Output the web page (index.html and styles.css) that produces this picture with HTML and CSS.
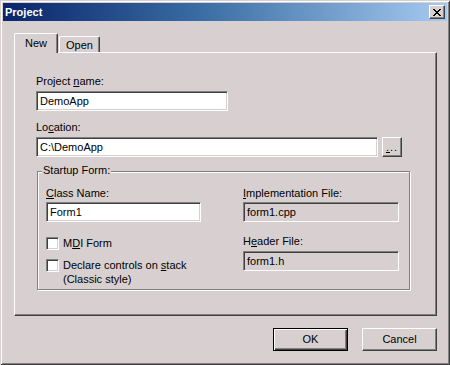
FILE: index.html
```html
<!DOCTYPE html>
<html>
<head>
<meta charset="utf-8">
<title>Project</title>
<link rel="stylesheet" href="styles.css">
</head>
<body>
<div class="window">
  <div class="titlebar">
    <span class="title">Project</span>
    <div class="close">
      <svg width="8" height="7" viewBox="0 0 8 7" shape-rendering="crispEdges">
        <path fill="#000" d="M0 0h2v1H0zM6 0h2v1H6zM1 1h2v1H1zM5 1h2v1H5zM2 2h4v1H2zM3 3h2v1H3zM2 4h4v1H2zM1 5h2v1H1zM5 5h2v1H5zM0 6h2v1H0zM6 6h2v1H6z"/>
      </svg>
    </div>
  </div>
  <div class="body">
    <div class="tabs">
      <div class="tab active">New</div>
      <div class="tab">Open</div>
    </div>
    <div class="panel">
      <div class="lbl">Project <u>n</u>ame:</div>
      <div class="field name">DemoApp</div>
      <div class="lbl loc-lbl">Lo<u>c</u>ation:</div>
      <div class="row">
        <div class="field loc">C:\DemoApp</div>
        <div class="btn browse"><span><u>.</u>..</span></div>
      </div>
      <div class="group">
        <span class="legend">Startup Form:</span>
        <div class="cols">
          <div class="col">
            <div class="lbl"><u>C</u>lass Name:</div>
            <div class="field">Form1</div>
            <div class="check first">
              <span class="box"></span>
              <span class="ctext">M<u>D</u>I Form</span>
            </div>
            <div class="check second">
              <span class="box"></span>
              <span class="ctext">Declare controls on <u>s</u>tack<br>(Classic style)</span>
            </div>
          </div>
          <div class="col">
            <div class="lbl"><u>I</u>mplementation File:</div>
            <div class="field ro">form1.cpp</div>
            <div class="lbl hdr-lbl">H<u>e</u>ader File:</div>
            <div class="field ro">form1.h</div>
          </div>
        </div>
      </div>
    </div>
    <div class="buttons">
      <div class="btn push default"><span>OK</span></div>
      <div class="btn push"><span>Cancel</span></div>
    </div>
  </div>
</div>
</body>
</html>
```

FILE: styles.css
```css
* { box-sizing: border-box; }

html, body {
  margin: 0;
  padding: 0;
  background: #d8d0d0;
}

body {
  font-family: "Liberation Sans", Arial, sans-serif;
  font-size: 11px;
  color: #000;
}

u { text-decoration: underline; text-underline-offset: 1px; }

.window {
  width: 450px;
  height: 365px;
  padding: 3px;
  background: #d8d0d0;
  box-shadow: inset 1px 1px #d8d0d0, inset -1px -1px #404040,
              inset 2px 2px #ffffff, inset -2px -2px #808080;
}

.titlebar {
  height: 18px;
  display: flex;
  align-items: center;
  justify-content: space-between;
  padding: 0 2px 0 2px;
  background: linear-gradient(to right, #0a246a 0%, #3a6ea5 45%, #a6caf0 100%);
}

.title {
  color: #fff;
  font-weight: bold;
  font-size: 11px;
  line-height: 13px;
}

.close {
  width: 16px;
  height: 14px;
  background: #d8d0d0;
  border: 1px solid;
  border-color: #fff #404040 #404040 #fff;
  box-shadow: inset -1px -1px #808080;
  display: flex;
  align-items: center;
  justify-content: center;
  padding-right: 1px;
}

.close svg { display: block; }

.body {
  padding: 12px 10px 0 11px;
}

.tabs {
  display: flex;
  align-items: flex-end;
  height: 19px;
}

.tab {
  height: 16px;
  width: 41px;
  margin-left: 1px;
  border: 1px solid;
  border-color: #fff #404040 transparent #fff;
  border-bottom: none;
  border-radius: 2px 2px 0 0;
  box-shadow: inset -1px 0 #808080;
  display: flex;
  align-items: center;
  justify-content: center;
  padding-top: 1px;
  line-height: 13px;
}

.tab.active {
  position: relative;
  z-index: 1;
  height: 20px;
  width: 44px;
  margin-left: 0;
  margin-right: 0;
  margin-bottom: -1px;
  background: #d8d0d0;
  padding-bottom: 1px;
}

.panel {
  width: 423px;
  height: 264px;
  border: 1px solid;
  border-color: #fff #404040 #404040 #fff;
  box-shadow: inset -1px -1px #808080;
  padding: 22px 0 0 21px;
}

.lbl {
  line-height: 13px;
  height: 13px;
  margin-bottom: 3px;
  white-space: nowrap;
}

.loc-lbl { margin-top: 10px; }

.field {
  height: 20px;
  background: #fff;
  border: 1px solid;
  border-color: #808080 #fff #fff #808080;
  box-shadow: inset 1px 1px #404040, inset -1px -1px #d8d0d0;
  padding: 0 3px;
  line-height: 18px;
  white-space: nowrap;
  overflow: hidden;
}

.field.name { width: 192px; }

.row {
  display: flex;
  gap: 4px;
}

.field.loc { width: 342px; }

.btn {
  background: #d8d0d0;
  border: 1px solid;
  border-color: #fff #404040 #404040 #fff;
  box-shadow: inset -1px -1px #808080;
  display: flex;
  align-items: center;
  justify-content: center;
}

.browse {
  width: 20px;
  height: 20px;
  align-items: flex-end;
  padding-bottom: 3px;
  letter-spacing: 1px;
  line-height: 11px;
}

.group {
  position: relative;
  margin-top: 14px;
  margin-left: 1px;
  width: 373px;
  height: 119px;
  border: 1px solid #808080;
  box-shadow: inset 1px 1px #fff, 1px 1px #fff;
  padding: 15px 0 0 8px;
}

.legend {
  position: absolute;
  top: -8px;
  left: 4px;
  padding: 0 1px;
  line-height: 13px;
  background: #d8d0d0;
}

.cols {
  display: grid;
  grid-template-columns: 155px 156px;
  column-gap: 42px;
}

.col .lbl { margin-bottom: 2px; }
.col .hdr-lbl { margin-top: 13px; margin-bottom: 3px; }

.field.ro { background: #d8d0d0; }

.check {
  display: flex;
  align-items: flex-start;
  gap: 4px;
}

.check.first { margin-top: 15px; }
.check.second { margin-top: 9px; }

.box {
  width: 13px;
  height: 13px;
  flex: none;
  background: #fff;
  border: 1px solid;
  border-color: #808080 #fff #fff #808080;
  box-shadow: inset 1px 1px #404040, inset -1px -1px #d8d0d0;
}

.ctext {
  line-height: 14px;
  margin-top: -1px;
  white-space: nowrap;
}

.buttons {
  display: flex;
  justify-content: flex-end;
  gap: 14px;
  margin-top: 12px;
}

.push {
  width: 75px;
  height: 23px;
  line-height: 13px;
}

.push.default {
  border: 1px solid #000;
  box-shadow: inset 1px 1px #fff, inset -1px -1px #404040, inset -2px -2px #808080;
}
```
